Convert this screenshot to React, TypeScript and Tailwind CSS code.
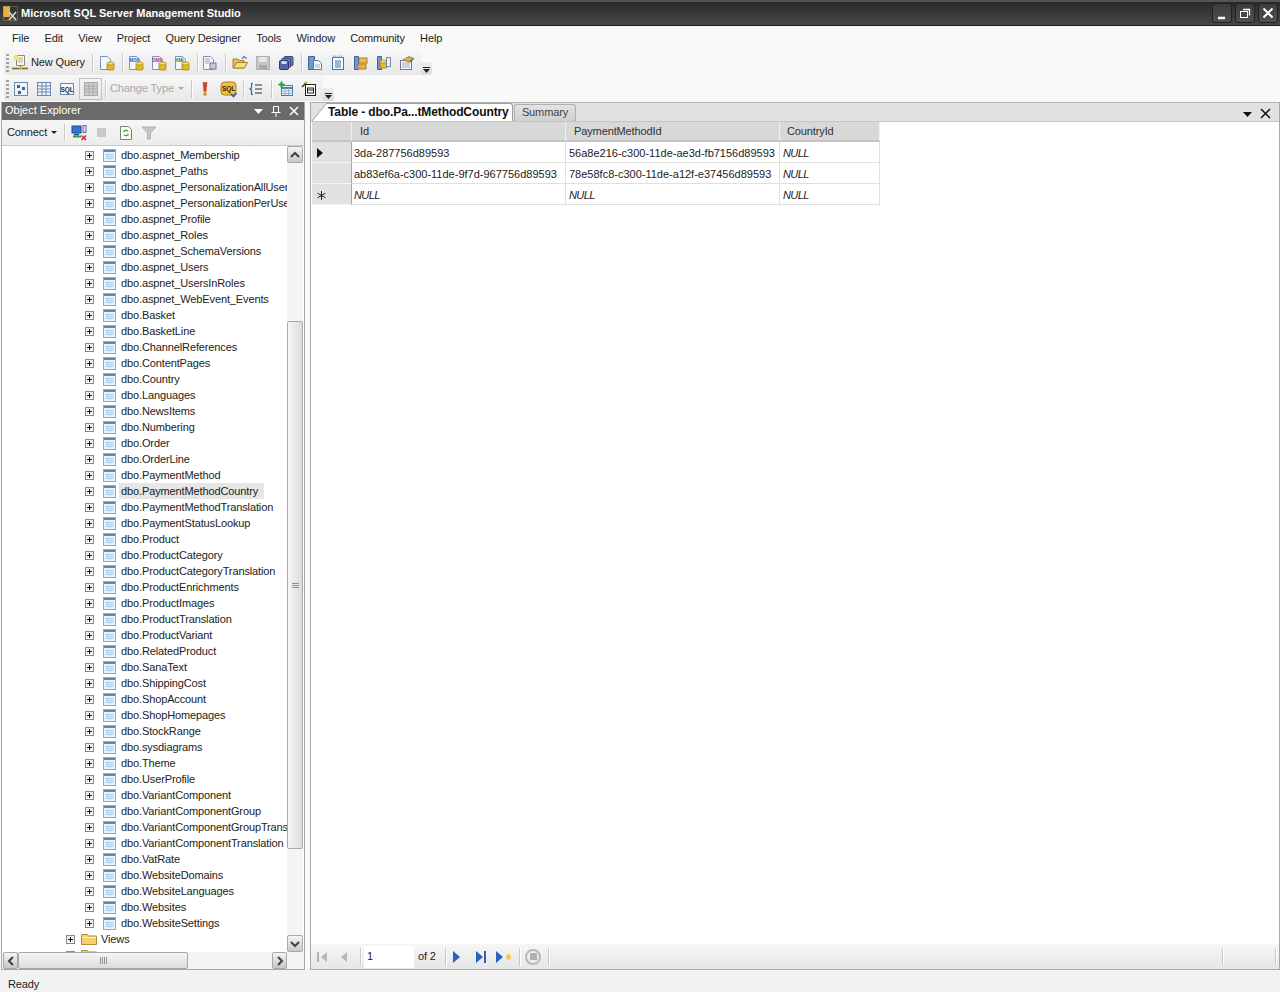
import type { ReactNode } from "react";

const menuItems = ["File", "Edit", "View", "Project", "Query Designer", "Tools", "Window", "Community", "Help"];

const tables = [
  "dbo.aspnet_Membership", "dbo.aspnet_Paths", "dbo.aspnet_PersonalizationAllUsers", "dbo.aspnet_PersonalizationPerUser",
  "dbo.aspnet_Profile", "dbo.aspnet_Roles", "dbo.aspnet_SchemaVersions", "dbo.aspnet_Users", "dbo.aspnet_UsersInRoles",
  "dbo.aspnet_WebEvent_Events", "dbo.Basket", "dbo.BasketLine", "dbo.ChannelReferences", "dbo.ContentPages", "dbo.Country",
  "dbo.Languages", "dbo.NewsItems", "dbo.Numbering", "dbo.Order", "dbo.OrderLine", "dbo.PaymentMethod", "dbo.PaymentMethodCountry",
  "dbo.PaymentMethodTranslation", "dbo.PaymentStatusLookup", "dbo.Product", "dbo.ProductCategory", "dbo.ProductCategoryTranslation",
  "dbo.ProductEnrichments", "dbo.ProductImages", "dbo.ProductTranslation", "dbo.ProductVariant", "dbo.RelatedProduct", "dbo.SanaText",
  "dbo.ShippingCost", "dbo.ShopAccount", "dbo.ShopHomepages", "dbo.StockRange", "dbo.sysdiagrams", "dbo.Theme", "dbo.UserProfile",
  "dbo.VariantComponent", "dbo.VariantComponentGroup", "dbo.VariantComponentGroupTranslation", "dbo.VariantComponentTranslation",
  "dbo.VatRate", "dbo.WebsiteDomains", "dbo.WebsiteLanguages", "dbo.Websites", "dbo.WebsiteSettings",
];

const rows = [
  { marker: "arrow", id: "3da-287756d89593", method: "56a8e216-c300-11de-ae3d-fb7156d89593", country: "NULL" },
  { marker: "", id: "ab83ef6a-c300-11de-9f7d-967756d89593", method: "78e58fc8-c300-11de-a12f-e37456d89593", country: "NULL" },
  { marker: "star", id: "NULL", method: "NULL", country: "NULL" },
];

function Ico({ children, w = 16, h = 16 }: { children: ReactNode; w?: number; h?: number }) {
  return (
    <svg width={w} height={h} viewBox={`0 0 ${w} ${h}`} className="shrink-0">
      {children}
    </svg>
  );
}

// little page with a folded corner, used by most toolbar icons
const Page = ({ x = 2, fill = "#f4f8fc" }: { x?: number; fill?: string }) => (
  <path d={`M${x + 0.5} 1.5h7l3 3v10h-10z`} fill={fill} stroke="#7a94b8" />
);
const Can = ({ x = 8, y = 7 }: { x?: number; y?: number }) => (
  <g>
    <rect x={x} y={y + 1} width="7" height="7" rx="1" fill="#e8b820" stroke="#9a7410" strokeWidth="0.7" />
    <ellipse cx={x + 3.5} cy={y + 1.5} rx="3.5" ry="1.5" fill="#f8e070" stroke="#9a7410" strokeWidth="0.6" />
  </g>
);

function Tag({ label, color }: { label: string; color: string }) {
  return (
    <Ico>
      <Page x={1} />
      <text x="1.500" y="6.500" fontSize="4.500" fontWeight="700" fontFamily="Liberation Sans, sans-serif" fill={color}>{label}</text>
      <Can />
    </Ico>
  );
}

const NewQueryIcon = () => (
  <Ico w={18} h={18}>
    <path d="M5.500 1.500h8v10h-8z" fill="#fffbe8" stroke="#8a8a70" />
    <path d="M7 4h5M7 6h5M7 8h5" stroke="#b0b0a0" />
    <circle cx="5" cy="3.500" r="2.600" fill="#ffe060" />
    <path d="M1 14.500h16" stroke="#7a6a20" strokeWidth="1.600" />
    <path d="M9.500 11.500v3" stroke="#7a6a20" />
    <circle cx="9.500" cy="14.500" r="1.500" fill="#e8b820" />
  </Ico>
);
const Doc = () => <Ico><Page x={1} /><Can x={8} /></Ico>;
const DocSmall = () => (
  <Ico>
    <Page x={1} />
    <rect x="8" y="8" width="6" height="6" fill="#c8ccd4" stroke="#70788a" />
    <path d="M3 4h5M3 6h5M3 8h4" stroke="#a0a8b8" />
  </Ico>
);
const Folder = () => (
  <Ico>
    <path d="M1 13V4h5l1 1.500h5v7.500z" fill="#e8c060" stroke="#a88028" />
    <path d="M1.500 13l3-5.500h11l-3 5.500z" fill="#f8dc80" stroke="#a88028" />
    <path d="M10 4l2-2.500 2.500 2" stroke="#4070b0" strokeWidth="1.200" fill="none" />
  </Ico>
);
const Floppy = () => (
  <Ico>
    <rect x="1.500" y="1.500" width="13" height="13" fill="#c6c6c6" stroke="#b0b0b0" />
    <rect x="4" y="2" width="8" height="5" fill="#e6e6e6" />
    <rect x="4" y="10" width="8" height="4" fill="#a8a8a8" />
  </Ico>
);
const Floppies = () => (
  <Ico>
    <rect x="6" y="1.500" width="9" height="9" rx="1" fill="#6a78b0" stroke="#3a4680" />
    <rect x="3.500" y="3.500" width="9" height="9" rx="1" fill="#7886c0" stroke="#3a4680" />
    <rect x="1.500" y="5.500" width="9" height="9" rx="1" fill="#5564a4" stroke="#2c3870" />
    <rect x="3.500" y="6" width="5" height="3" fill="#d8dcf0" />
  </Ico>
);
const TwoDocs = () => (
  <Ico>
    <path d="M1.500 1.500h6v13h-6z" fill="#6f98cc" stroke="#3c6498" />
    <path d="M6.500 5.500h5l3 3v6h-8z" fill="#f4f8fc" stroke="#5a7aa8" />
    <path d="M8 10h5M8 12h5" stroke="#9ab0cc" />
  </Ico>
);
const Notes = () => (
  <Ico>
    <rect x="2.500" y="2.500" width="11" height="12" fill="#f4f8ff" stroke="#4a70a8" />
    <path d="M3 1.500h10" stroke="#d0a030" strokeWidth="2" strokeDasharray="1 1" />
    <path d="M5 6h6M5 8h6M5 10h6M5 12h6" stroke="#4a70a8" />
  </Ico>
);
const Tree2 = () => (
  <Ico>
    <path d="M1.500 1.500h4v13h-4z" fill="#6f98cc" stroke="#3c6498" />
    <rect x="6" y="3" width="8" height="5" fill="#e8c060" stroke="#a88028" />
    <rect x="5" y="9" width="8" height="5" fill="#e0b050" stroke="#a88028" />
  </Ico>
);
const Tree3 = () => (
  <Ico>
    <path d="M1.500 1.500h4v13h-4z" fill="#6f98cc" stroke="#3c6498" />
    <Can x={4} y={5} />
    <rect x="10.500" y="2.500" width="4" height="9" fill="#e8eef6" stroke="#7a8ca8" />
  </Ico>
);
const Wrench = () => (
  <Ico>
    <rect x="1.500" y="5.500" width="11" height="9" fill="#f4f8fc" stroke="#6a7a90" />
    <path d="M3 8h8M3 10h8M3 12h8" stroke="#a0a8b8" />
    <path d="M4 5l6-3.500 5 2-5 3.500z" fill="#d8b050" stroke="#8a6a20" strokeWidth="0.700" />
    <path d="M11 7l3-3" stroke="#508040" strokeWidth="1.500" />
  </Ico>
);
const Diagram = () => (
  <Ico>
    <rect x="1.500" y="1.500" width="13" height="13" fill="#eef4fc" stroke="#6a88b0" />
    <rect x="4" y="4" width="3" height="3" fill="#3868a8" />
    <rect x="9" y="6" width="3" height="3" fill="#3868a8" />
    <rect x="5" y="10" width="3" height="3" fill="#3868a8" />
  </Ico>
);
const GridIco = ({ dim = false }: { dim?: boolean }) => {
  const c = dim ? "#a8a8a8" : "#6a88b0";
  return (
    <Ico>
      <rect x="1.500" y="1.500" width="13" height="13" fill={dim ? "#cfcfcf" : "#f0f4fa"} stroke={c} />
      <path d="M1.500 5h13M1.500 8h13M1.500 11h13M6 1.500v13M10 1.500v13" stroke={c} />
    </Ico>
  );
};
const SqlIco = () => (
  <Ico>
    <rect x="1.500" y="2.500" width="13" height="11" fill="#f4f8fc" stroke="#6a88b0" />
    <text x="8" y="10.500" textAnchor="middle" fontSize="6.500" fontWeight="700" fontFamily="Liberation Sans, sans-serif" fill="#203050">SQL</text>
  </Ico>
);
const Bang = () => (
  <Ico>
    <path d="M6 1.500h4l-1 9h-2z" fill="#e04020" stroke="#a82810" strokeWidth="0.500" />
    <circle cx="8" cy="13" r="1.800" fill="#d09020" />
  </Ico>
);
const SqlCheck = () => (
  <Ico w={18} h={18}>
    <rect x="1" y="2" width="15" height="13" rx="3.500" fill="#f0c040" stroke="#a88020" />
    <text x="8.500" y="11" textAnchor="middle" fontSize="6.500" fontWeight="700" fontFamily="Liberation Sans, sans-serif" fill="#302000">SQL</text>
    <path d="M11 14l2.500 2.500 3-3.500" stroke="#3858b0" strokeWidth="1.600" fill="none" />
  </Ico>
);
const Brace = () => (
  <Ico>
    <path d="M5 2.500H3.500v4.500L2 8l1.500 1v4.500H5" stroke="#3868a8" strokeWidth="1.200" fill="none" />
    <path d="M7 4h7M7 8h7M7 12h7" stroke="#303030" strokeWidth="1.200" />
  </Ico>
);
const AddTable = () => (
  <Ico>
    <rect x="3.500" y="4.500" width="11" height="10" fill="#eef4fc" stroke="#4a78b0" />
    <path d="M3.500 7h11" stroke="#4a78b0" strokeWidth="2" />
    <path d="M3.500 10h11M3.500 12.500h11M7 7v7M10.500 7v7" stroke="#90aed0" />
    <path d="M3.500 0.500v6M0.500 3.500h6" stroke="#30a040" strokeWidth="2" />
  </Ico>
);
const WandDoc = () => (
  <Ico>
    <rect x="4.500" y="3.500" width="10" height="11" fill="#fff" stroke="#202020" />
    <rect x="6.500" y="7" width="6" height="5" fill="#fff" stroke="#202020" />
    <path d="M7 9h5" stroke="#202020" />
    <path d="M1 6l4-4" stroke="#303030" strokeWidth="1.400" />
    <path d="M5 0.500v2.500M3.500 1.500h3" stroke="#d8b020" />
  </Ico>
);
const Chevron = () => (
  <svg width="7" height="6" viewBox="0 0 7 6">
    <path d="M0 0.500h7" stroke="#202020" />
    <path d="M0 2h7L3.500 6z" fill="#202020" />
  </svg>
);
const ConnectIco = () => (
  <Ico w={17} h={17}>
    <rect x="1" y="2" width="9" height="7" fill="#3a70d0" stroke="#204890" />
    <path d="M2 12.500h8" stroke="#30a040" strokeWidth="2" />
    <path d="M3 10.500h5" stroke="#204890" strokeWidth="1.500" />
    <rect x="12" y="1.500" width="3" height="7" fill="#d8dce8" stroke="#5870a0" />
    <path d="M10.500 11.500l4.500 4.500M15 11.500L10.500 16" stroke="#d82020" strokeWidth="1.500" />
  </Ico>
);
const Refresh = () => (
  <Ico>
    <path d="M2.500 1.500h8l3 3v10h-11z" fill="#fbfbf2" stroke="#808070" />
    <path d="M10 6a3 3 0 0 0-4.500 1M6 10a3 3 0 0 0 4.500-1" stroke="#38a040" strokeWidth="1.300" fill="none" />
  </Ico>
);
const Filter = () => (
  <Ico>
    <path d="M1 2h14L9.500 8v6h-3V8z" fill="#c4c4c4" stroke="#b4b4b4" />
  </Ico>
);
const Sep = ({ h = "h-[18px]" }: { h?: string }) => <div className={`w-px ${h} bg-[#c8c8c8] border-r border-white box-content shrink-0`} />;

const Grip = () => (
  <div className="w-[3px] h-[18px] shrink-0 bg-[repeating-linear-gradient(to_bottom,#a0a0a0_0_2px,transparent_2px_4px)]" />
);

const TableIcon = () => (
  <svg width="13" height="13" viewBox="0 0 13 13" className="shrink-0">
    <rect x="0.500" y="0.500" width="12" height="12" fill="#eef3fa" stroke="#8aa8d0" />
    <rect x="1" y="1" width="11" height="2" fill="#5c88c4" />
    <path d="M2.500 5.500h8M2.500 7.500h8M2.500 9.500h8" stroke="#a8c0e0" />
    <path d="M6.500 4v7" stroke="#d0deee" />
  </svg>
);

const Expander = () => (
  <svg width="9" height="9" viewBox="0 0 9 9" className="shrink-0">
    <rect x="0.500" y="0.500" width="8" height="8" fill="#f4f4f4" stroke="#8a8a8a" />
    <path d="M2 4.500h5M4.500 2v5" stroke="#101010" />
  </svg>
);

const FolderSmall = () => (
  <svg width="16" height="12" viewBox="0 0 16 12" className="shrink-0">
    <path d="M0.500 11.500v-10h6l1 1.500h8v8.500z" fill="#f0d070" stroke="#b09030" />
    <path d="M1 4h14v1H1z" fill="#fff4c0" />
  </svg>
);

function TreeRow({ name }: { name: string }) {
  const selected = name === "dbo.PaymentMethodCountry";
  return (
    <div className="h-4 flex items-center pl-[83px] whitespace-nowrap shrink-0">
      <Expander />
      <div className="w-[9px] shrink-0" />
      <TableIcon />
      <span className={`ml-[3px] pl-[2px] pr-[6px] leading-4 ${selected ? "bg-[#e6e6e6]" : ""}`}>{name}</span>
    </div>
  );
}

function ArrowBtn({ dir, className = "" }: { dir: "up" | "down" | "left" | "right"; className?: string }) {
  const d = { up: "M1 6l4-4 4 4", down: "M1 2l4 4 4-4", left: "M6 1L2 5l4 4", right: "M2 1l4 4-4 4" }[dir];
  const vert = dir === "up" || dir === "down";
  return (
    <div className={`flex items-center justify-center shrink-0 rounded-[2px] border border-[#a8a8a8] bg-gradient-to-b from-[#f4f4f4] to-[#c8c8c8] ${className}`}>
      <svg width={vert ? 10 : 8} height={vert ? 8 : 10} viewBox={vert ? "0 0 10 8" : "0 0 8 10"}>
        <path d={d} fill="none" stroke="#404040" strokeWidth="2" />
      </svg>
    </div>
  );
}

function NullText() {
  return <span className="italic tracking-[-0.6px]">NULL</span>;
}

function Cell({ value, pl }: { value: string; pl: string }) {
  return (
    <div className={`h-[21px] flex items-center pt-[2px] ${pl} bg-white border-r border-b border-[#e0e0e0] whitespace-nowrap overflow-hidden tracking-normal`}>
      {value === "NULL" ? <NullText /> : value}
    </div>
  );
}

const NavArrow = ({ children, w = 12 }: { children: ReactNode; w?: number }) => (
  <svg width={w} height="14" viewBox={`0 0 ${w} 14`} className="shrink-0">{children}</svg>
);

export default function App() {
  return (
    <div className="w-[1280px] h-[992px] flex flex-col overflow-hidden bg-[#f9f9f9] font-['Liberation_Sans',sans-serif] text-[11px] tracking-[-0.12px] text-[#222]">
      {/* Title bar */}
      <div className="h-[26px] shrink-0 flex items-center pl-[2px] pr-[2px] bg-gradient-to-b from-[#2a2a2a] to-[#484848] border-t-2 border-[#555] border-b border-b-[#222]">
        <svg width="18" height="18" viewBox="0 0 18 18" className="shrink-0">
          <rect x="1" y="1" width="7" height="11" fill="#e8b040" />
          <rect x="1.500" y="1.500" width="14" height="14" fill="none" stroke="#80905a" strokeDasharray="1 1" />
          <path d="M7 15l7-8M7 7l7 8" stroke="#d8dce0" strokeWidth="1.500" />
        </svg>
        <span className="ml-[1px] -mt-[1px] font-bold text-[11px] tracking-normal text-white">Microsoft SQL Server Management Studio</span>
        <div className="ml-auto flex gap-[3px]">
          {[
            <path key="min" d="M4 13h7" stroke="#fff" strokeWidth="2.500" />,
            <g key="max" fill="none" stroke="#fff"><rect x="3.500" y="6.500" width="7" height="6" /><path d="M6 4.500h6.500v6" strokeWidth="1.300" /></g>,
            <path key="close" d="M3.500 3.500l9 9M12.500 3.500l-9 9" stroke="#fff" strokeWidth="2" />,
          ].map((glyph, i) => (
            <div key={i} className="w-[20px] h-[20px] -mt-[1px] flex items-center justify-center rounded-[3px] border border-[#222] bg-gradient-to-b from-[#3c3c3c] to-[#505050]">
              <svg width="16" height="16" viewBox="0 0 16 16">{glyph}</svg>
            </div>
          ))}
        </div>
      </div>

      {/* Menu */}
      <div className="h-[24px] shrink-0 flex items-center pl-[12px] gap-[15.3px]">
        {menuItems.map((m) => (
          <span key={m} className="whitespace-nowrap">{m}</span>
        ))}
      </div>

      {/* Toolbars */}
      <div className="h-[25px] shrink-0 flex items-start pl-[4px]">
        <div className="h-[25px] w-[417px] rounded-[3px] bg-gradient-to-b from-[#f6f6f6] to-[#e8e8e8] flex items-center pl-[2px]">
          <Grip />
          <div className="ml-[2px] flex items-center gap-[2px] w-[73px] shrink-0"><NewQueryIcon /><span className="whitespace-nowrap">New Query</span></div>
          <div className="ml-[8px]"><Sep /></div>
          <div className="ml-[5px]"><Doc /></div>
          <div className="ml-[7px]"><Sep /></div>
          <div className="ml-[4px] flex gap-[7px]"><Tag label="MDX" color="#3060b0" /><Tag label="DMX" color="#a03090" /><Tag label="XML" color="#208050" /></div>
          <div className="ml-[7px]"><Sep /></div>
          <div className="ml-[3px]"><DocSmall /></div>
          <div className="ml-[7px]"><Sep /></div>
          <div className="ml-[5px] flex gap-[7px]"><Folder /><Floppy /><Floppies /></div>
          <div className="ml-[7px]"><Sep /></div>
          <div className="ml-[4px] flex gap-[7px]"><TwoDocs /><Notes /><Tree2 /><Tree3 /><Wrench /></div>
        </div>
        <div className="h-[13px] w-[11px] mt-[12px] rounded-r-[3px] bg-gradient-to-b from-[#ececec] to-[#dcdcdc] flex items-end justify-center pb-[2px]"><Chevron /></div>
      </div>
      <div className="h-[27px] shrink-0 flex items-start pl-[4px] pt-[1px]">
        <div className="h-[25px] w-[319px] rounded-[3px] bg-gradient-to-b from-[#f6f6f6] to-[#e8e8e8] flex items-center pl-[2px]">
          <Grip />
          <div className="ml-[4px] flex gap-[7px] items-center"><Diagram /><GridIco /><SqlIco /></div>
          <div className="ml-[4px] w-[23px] h-[22px] shrink-0 border border-[#c0c0c0] flex items-center justify-center"><GridIco dim /></div>
          <div className="ml-[3px]"><Sep /></div>
          <span className="ml-[3px] w-[65px] shrink-0 whitespace-nowrap text-[#a8a8a8]">Change Type</span>
          <svg width="6" height="4" viewBox="0 0 6 4" className="ml-[3px] shrink-0"><path d="M0 0h6L3 3z" fill="#a8a8a8" /></svg>
          <div className="ml-[7px]"><Sep /></div>
          <div className="ml-[4px]"><Bang /></div>
          <div className="ml-[7px]"><SqlCheck /></div>
          <div className="ml-[5px]"><Sep /></div>
          <div className="ml-[3px]"><Brace /></div>
          <div className="ml-[7px]"><Sep /></div>
          <div className="ml-[5px]"><AddTable /></div>
          <div className="ml-[7px]"><WandDoc /></div>
        </div>
        <div className="h-[13px] w-[11px] mt-[12px] rounded-r-[3px] bg-gradient-to-b from-[#ececec] to-[#dcdcdc] flex items-end justify-center pb-[2px]"><Chevron /></div>
      </div>

      {/* Panels */}
      <div className="flex-1 min-h-0 flex pl-[1px] gap-[5px]">
        {/* Object Explorer */}
        <div className="w-[304px] flex flex-col border border-t-0 border-[#a8a8a8] bg-white">
          <div className="h-[18px] shrink-0 flex items-center pl-[3px] pr-[4px] bg-[#6a6a6a] text-white">
            <span className="-mt-[2px] tracking-normal">Object Explorer</span>
            <svg width="9" height="5" viewBox="0 0 9 5" className="ml-auto"><path d="M0 0h9L4.500 5z" fill="#fff" /></svg>
            <svg width="12" height="12" viewBox="0 0 12 12" className="ml-[7px]"><path d="M3.500 1.500h5v6h-5zM1.500 7.500h9M6 8v4" fill="none" stroke="#fff" /></svg>
            <svg width="12" height="12" viewBox="0 0 12 12" className="ml-[6px]"><path d="M2 2l8 8M10 2l-8 8" stroke="#fff" strokeWidth="1.500" /></svg>
          </div>
          <div className="h-[26px] shrink-0 flex items-center pl-[5px] bg-gradient-to-b from-[#f6f6f6] to-[#ececec] border-b border-[#c8c8c8]">
            <span className="w-[42px] shrink-0 whitespace-nowrap">Connect</span>
            <svg width="6" height="4" viewBox="0 0 6 4" className="ml-[2px] shrink-0"><path d="M0 0h6L3 3z" fill="#202020" /></svg>
            <div className="ml-[7px]"><Sep h="h-[17px]" /></div>
            <div className="ml-[5px]"><ConnectIco /></div>
            <div className="ml-[9px] w-[9px] h-[9px] bg-[#c8c8c8]" />
            <div className="ml-[12px]"><Refresh /></div>
            <div className="ml-[7px]"><Filter /></div>
          </div>
          <div className="flex-1 min-h-0 flex">
            <div className="flex-1 min-w-0 overflow-hidden flex flex-col pt-[1px]">
              {tables.map((t) => (
                <TreeRow key={t} name={t} />
              ))}
              <div className="h-4 flex items-center pl-[64px] shrink-0">
                <Expander />
                <div className="w-[6px] shrink-0" />
                <FolderSmall />
                <span className="ml-[4px]">Views</span>
              </div>
              <div className="h-4 flex items-center pl-[64px] shrink-0">
                <Expander />
                <div className="w-[6px] shrink-0" />
                <FolderSmall />
              </div>
            </div>
            <div className="w-[16px] shrink-0 mr-[1px] flex flex-col bg-[#f4f4f4]">
              <ArrowBtn dir="up" className="h-[17px]" />
              <div className="h-[158px] shrink-0" />
              <div className="h-[528px] shrink-0 rounded-[2px] border border-[#a8a8a8] bg-gradient-to-r from-[#f6f6f6] to-[#dcdcdc] flex items-center justify-center">
                <div className="w-[7px] h-[5px] bg-[repeating-linear-gradient(to_bottom,#909090_0_1px,transparent_1px_2px)]" />
              </div>
              <div className="flex-1" />
              <ArrowBtn dir="down" className="h-[17px]" />
            </div>
          </div>
          <div className="h-[17px] shrink-0 flex pl-[1px] pr-[17px] bg-[#f4f4f4]">
            <ArrowBtn dir="left" className="w-[15px]" />
            <div className="w-[170px] shrink-0 rounded-[2px] border border-[#a8a8a8] bg-gradient-to-b from-[#f6f6f6] to-[#dcdcdc] flex items-center justify-center">
              <div className="w-[7px] h-[7px] bg-[repeating-linear-gradient(to_right,#909090_0_1px,transparent_1px_2px)]" />
            </div>
            <div className="flex-1" />
            <ArrowBtn dir="right" className="w-[15px]" />
          </div>
        </div>

        {/* Document */}
        <div className="flex-1 min-w-0 flex flex-col border border-t-0 border-[#a8a8a8] bg-white">
          <div className="h-[20px] shrink-0 flex items-end pl-[1px] pr-[8px] bg-[#e2e2e2] border-t border-[#b0b0b0] border-b border-b-[#c4c4c4]">
            <svg width="14" height="18" viewBox="0 0 14 18" className="shrink-0"><path d="M0 18L14 1v17z" fill="#fff" /><path d="M0 18L14 1" stroke="#a0a0a0" fill="none" /></svg>
            <div className="h-[18px] w-[187px] shrink-0 pl-[2px] pb-[2px] flex items-center bg-white rounded-tr-[3px] border-r border-[#a0a0a0] border-t border-t-[#a0a0a0] font-bold text-[12px] tracking-[-0.1px] text-[#101010] whitespace-nowrap">
              Table - dbo.Pa...tMethodCountry
            </div>
            <div className="h-[17px] w-[62px] shrink-0 ml-[1px] pb-[2px] flex items-center justify-center bg-gradient-to-b from-[#e4e4e4] to-[#cfcfcf] rounded-t-[3px] border border-b-0 border-[#b0b0b0] text-[#404040]">
              Summary
            </div>
            <svg width="9" height="5" viewBox="0 0 9 5" className="ml-auto mb-[4px]"><path d="M0 0h9L4.500 5z" fill="#101010" /></svg>
            <svg width="11" height="11" viewBox="0 0 11 11" className="ml-[8px] mb-[2px]"><path d="M1 1l9 9M10 1l-9 9" stroke="#101010" strokeWidth="1.500" /></svg>
          </div>
          <div className="flex-1 min-h-0 pl-[1px]">
            <div className="w-[568px] grid grid-cols-[40px_214px_214px_100px]">
              <div className="h-[20px] bg-[#d8d8d8] border-r border-[#f0f0f0] border-b-2 border-b-[#c4c4c4]" />
              {[["Id", "pl-[8px]"], ["PaymentMethodId", "pl-[8px]"], ["CountryId", "pl-[7px]"]].map(([h, pl]) => (
                <div key={h} className={`h-[20px] flex items-center ${pl} bg-[#d8d8d8] border-r border-[#f0f0f0] border-b-2 border-b-[#c4c4c4] text-[#303030]`}>{h}</div>
              ))}
              {rows.map((r) => (
                <div key={r.method + r.id} className="contents">
                  <div className="h-[21px] flex items-center pl-[5px] pt-[2px] bg-[#e2e2e2] border-r border-[#a8a8a8] border-b border-b-[#f4f4f4]">
                    {r.marker === "arrow" && <svg width="6" height="10" viewBox="0 0 6 10"><path d="M0 0l6 5-6 5z" fill="#101010" /></svg>}
                    {r.marker === "star" && <svg width="9" height="9" viewBox="0 0 9 9"><path d="M4.500 0v9M0.500 2.200l8 4.600M8.500 2.200l-8 4.600" stroke="#202020" /></svg>}
                  </div>
                  <Cell value={r.id} pl="pl-[2px]" />
                  <Cell value={r.method} pl="pl-[3px]" />
                  <Cell value={r.country} pl="pl-[3px]" />
                </div>
              ))}
            </div>
          </div>
          <div className="h-[25px] shrink-0 flex items-center pl-[5px] pr-[2px] bg-gradient-to-b from-[#f6f6f6] to-[#e6e6e6]">
            <NavArrow><path d="M2 2v10" stroke="#b0b0b0" strokeWidth="2" /><path d="M11 2L5 7l6 5z" fill="#b8b8b8" /></NavArrow>
            <div className="ml-[9px]"><NavArrow><path d="M10 2L4 7l6 5z" fill="#b8b8b8" /></NavArrow></div>
            <div className="ml-[11px]"><Sep /></div>
            <div className="ml-[2px] w-[50px] h-[22px] shrink-0 bg-white flex items-center pl-[3px] text-[#202020]">1</div>
            <span className="ml-[4px] w-[18px] shrink-0 whitespace-nowrap">of 2</span>
            <div className="ml-[9px]"><Sep /></div>
            <div className="ml-[3px]"><NavArrow><path d="M3 1l7 6-7 6z" fill="#2a62c0" /></NavArrow></div>
            <div className="ml-[12px]"><NavArrow><path d="M2 1l7 6-7 6z" fill="#2a62c0" /><path d="M11 1v12" stroke="#2a62c0" strokeWidth="2" /></NavArrow></div>
            <div className="ml-[9px]">
              <NavArrow w={18}><path d="M1 1l7 6-7 6z" fill="#2a62c0" /><path d="M10.500 7h6M13.500 4v6M11.500 4.500l4 5M15.500 4.500l-4 5" stroke="#e8c030" /></NavArrow>
            </div>
            <div className="ml-[6px]"><Sep /></div>
            <div className="ml-[4px] w-[16px] h-[16px] shrink-0 rounded-full border-2 border-[#b8b8b8] flex items-center justify-center"><div className="w-[7px] h-[7px] bg-[#b0b0b0]" /></div>
            <div className="ml-[7px]"><Sep /></div>
            <div className="ml-auto mr-[51px]"><Sep h="h-[16px]" /></div>
            <Sep h="h-[16px]" />
          </div>
        </div>
      </div>

      {/* Status bar */}
      <div className="h-[22px] shrink-0 flex items-center pt-[7px] pl-[8px] bg-[#f2f2f2] text-[#202020]">Ready</div>
    </div>
  );
}
